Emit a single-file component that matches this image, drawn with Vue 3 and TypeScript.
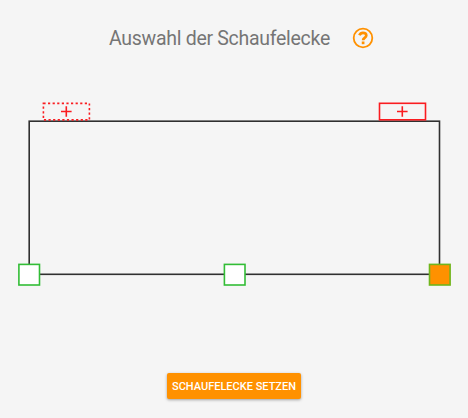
<script setup lang="ts">
import { ref } from 'vue'

interface Corner {
  id: string
  x: number
  y: number
}

const corners: Corner[] = [
  { id: 'left', x: 29.2, y: 184.7 },
  { id: 'center', x: 234.7, y: 184.7 },
  { id: 'right', x: 439.8, y: 184.7 },
]

const selected = ref<string>('right')
</script>

<template>
  <main class="page">
    <header class="header">
      <h1 class="title">Auswahl der Schaufelecke</h1>
      <button class="help" type="button">
        <svg width="22" height="22" viewBox="0 0 22 22">
          <circle cx="11" cy="11" r="9.3" />
          <path class="hook" d="M7.4 8.2C8.200 6.500 9.400 5.900 10.900 5.900c1.900 0 3.400 1.100 3.400 2.700 0 2.400-3.200 2.300-3.200 4.600" />
          <path class="dot" d="M11.100 14.500v2.700" />
        </svg>
      </button>
    </header>

    <svg class="bucket" width="468" height="210" viewBox="0 0 468 210">
      <rect class="outline" x="29.2" y="31.2" width="410.3" height="153.1" />
      <g class="mount">
        <rect class="dashed" x="43.4" y="13.4" width="46" height="16.5" />
        <path d="M61 21.5h10.6M66.3 16.2v10.6" />
      </g>
      <g class="mount">
        <rect x="379.5" y="13.3" width="46" height="16.5" />
        <path d="M397 21.5h10.6M402.3 16.2v10.6" />
      </g>
      <rect
        v-for="corner in corners"
        :key="corner.id"
        class="corner"
        :class="{ active: corner.id === selected }"
        :x="corner.x - 10.3"
        :y="corner.y - 10.3"
        width="20.6"
        height="20.6"
        @click="selected = corner.id"
      />
    </svg>

    <button class="submit" type="button">SCHAUFELECKE SETZEN</button>
  </main>
</template>

<style>
body {
  background: #f5f5f5;
}
</style>

<style scoped>
.page {
  display: flex;
  flex-direction: column;
  align-items: center;
  width: 468px;
  height: 418px;
  background: #f5f5f5;
  font-family: Roboto, 'Liberation Sans', sans-serif;
}

.header {
  display: flex;
  align-items: center;
  align-self: stretch;
  gap: 23px;
  height: 76px;
  padding-left: 109px;
}

.title {
  flex: none;
  width: 220px;
  margin: 0;
  padding-top: 2px;
  color: #757575;
  font-size: 19.5px;
  font-weight: 400;
  letter-spacing: -0.29px;
  line-height: 24px;
  white-space: nowrap;
}

.help {
  display: flex;
  padding: 0;
  border: 0;
  background: none;
}

.help svg {
  fill: none;
  stroke: #ff9100;
  stroke-width: 1.8;
}

.help .hook,
.help .dot {
  stroke-width: 2.7;
}

.bucket {
  display: block;
  flex: none;
  margin-top: 14px;
}

.outline {
  fill: none;
  stroke: #303030;
  stroke-width: 1.6;
}

.mount {
  fill: none;
  stroke: #fa1c20;
  stroke-width: 1.6;
}

.dashed {
  stroke-dasharray: 2.2 2.4;
}

.corner {
  fill: #fff;
  stroke: #32bd36;
  stroke-width: 1.6;
}

.corner.active {
  fill: #ff9100;
  stroke: #70b51c;
}

.submit {
  flex: none;
  width: 134px;
  height: 26px;
  margin-top: 73px;
  padding: 1px 0 0;
  border: 0;
  border-radius: 2px;
  background: #ff9100;
  box-shadow: 0 1px 3px rgba(0, 0, 0, 0.35);
  color: #fff;
  font-family: inherit;
  font-size: 11px;
  font-weight: 500;
  line-height: 25px;
  white-space: nowrap;
}
</style>
